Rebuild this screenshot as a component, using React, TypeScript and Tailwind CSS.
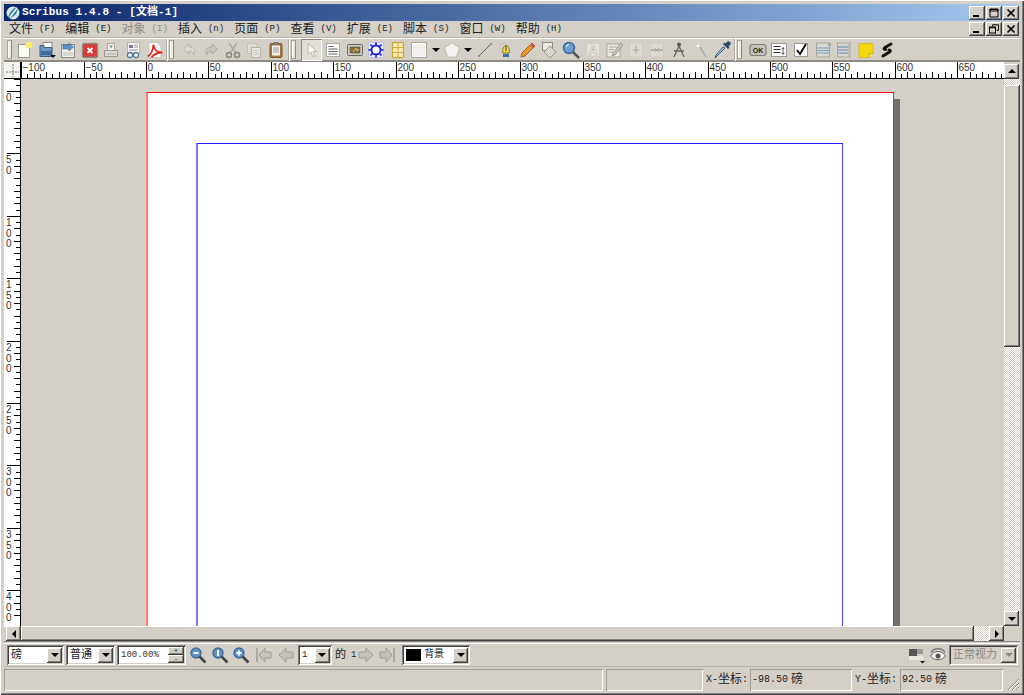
import React from "react";

const raised = "shadow-[inset_-1px_-1px_0_#404040,inset_1px_1px_0_#ffffff,inset_-2px_-2px_0_#808080,inset_2px_2px_0_#d4d0c8]";
const sunken = "shadow-[inset_1px_1px_0_#808080,inset_-1px_-1px_0_#ffffff,inset_2px_2px_0_#404040,inset_-2px_-2px_0_#d4d0c8]";
const thin = "shadow-[inset_1px_1px_0_#a09c94,inset_-1px_-1px_0_#ffffff]";
const dither = "bg-[repeating-conic-gradient(#ffffff_0_25%,#d4d0c8_0_50%)] bg-[length:2px_2px]";

const I = ({ children, w = 18 }: { children: React.ReactNode; w?: number }) => (
  <svg width={w} height="18" viewBox={`0 0 ${w} 18`} className="block">{children}</svg>
);

const Tri = ({ dir, c = "#000" }: { dir: "u" | "d" | "l" | "r"; c?: string }) => {
  const p = { u: "1,6 9,6 5,2", d: "1,3 9,3 5,7", l: "7,1 7,9 3,5", r: "3,1 3,9 7,5" }[dir];
  return <svg width="10" height="10" viewBox="0 0 10 10" className="block"><polygon points={p} fill={c} /></svg>;
};

const Handle = () => (
  <div className="w-[5px] h-[19px] shrink-0 border border-[#a8a49c] border-r-[#8c887f] bg-[#ece9e2] shadow-[inset_1px_0_0_#ffffff]" />
);
const Sep = () => <div className="w-[2px] h-[22px] mx-[1px] shrink-0 bg-[#b0aca4] border-r border-white" />;

const B = ({ children, w = "w-[21.6px]", pressed = false }: { children: React.ReactNode; w?: string; pressed?: boolean }) => (
  <div className={`${w} h-[22px] shrink-0 flex items-center justify-center ${pressed ? "bg-[#e2dfd9] shadow-[inset_1px_1px_0_#8c887f,inset_-1px_-1px_0_#ffffff]" : ""}`}>{children}</div>
);

const icons: Record<string, React.ReactNode> = {
  nw: <I><rect x="2.5" y="3.5" width="11" height="13" fill="#fbfbf6" stroke="#9a9a92" /><circle cx="13" cy="4" r="3" fill="#fff04a" stroke="#f3e9a0" /></I>,
  open: <I><rect x="5" y="1.5" width="9" height="8" fill="#fff" stroke="#888" /><path d="M2 4.500h4v2h8v9H2z" fill="#6d97c4" stroke="#3c5f86" /><path d="M3 10h11v4H3z" fill="#3f6c9e" /><path d="M12 14h6l-3 3z" fill="#111" /></I>,
  save: <I><rect x="2.5" y="3.5" width="13" height="13" fill="#f0f0ea" stroke="#8a8a84" /><rect x="4" y="11" width="10" height="4" fill="#d6d6d0" /><path d="M4 4h6V2l4.500 4L10 10V8H4z" fill="#5b93c9" stroke="#2f6494" strokeWidth=".6" /></I>,
  close: <I><rect x="1.500" y="2.500" width="15" height="14" rx="1.500" fill="#d93a35" stroke="#8c8c84" strokeWidth="1.300" /><path d="M6.500 7l5 5m0-5l-5 5" stroke="#fff" strokeWidth="1.800" /></I>,
  print: <I><rect x="5.5" y="2.5" width="7" height="7" fill="#f0f0ee" stroke="#aaa" /><path d="M7.500 5h3m-1.500 0v2" stroke="#777" /><rect x="2.5" y="9.5" width="13" height="6" fill="#dedcd7" stroke="#9a9a95" /><path d="M4 13h10" stroke="#aaa" /></I>,
  pre: <I><rect x="3.5" y="1.5" width="12" height="11" fill="#f8f8f6" stroke="#b5b5b0" /><rect x="5" y="4" width="4" height="3" fill="#778" /><path d="M10 4h4M10 6h4M5 9h9" stroke="#99a" /><circle cx="6" cy="14" r="2.5" fill="#fff" stroke="#55799e" strokeWidth="1.300" /><circle cx="12" cy="14" r="2.5" fill="#fff" stroke="#55799e" strokeWidth="1.300" /></I>,
  pdf: <I><path d="M3 1.5h8l4 4v11H3z" fill="#fff" stroke="#c5c5c0" /><path d="M2 15.500c3-2 5-6 5.500-12 .5 5 4 8 9 8-5 0-9 2-11 5" fill="none" stroke="#e02b20" strokeWidth="1.800" /></I>,
  undo: <I><path d="M8 3L2.5 8 8 13V10c3 0 4 1 5 4 2-4 1-8-5-8z" fill="#dcd9d2" stroke="#b8b4ac" /></I>,
  redo: <I><path d="M10 3l5.5 5L10 13V10c-3 0-4 1-5 4-2-4-1-8 5-8z" fill="#c9c6bf" stroke="#b0aca4" /></I>,
  cut: <I><path d="M5 2l7 10M13 2L6 12" stroke="#b0ada6" strokeWidth="1.600" /><circle cx="5" cy="14" r="2.5" fill="none" stroke="#8a8880" strokeWidth="1.600" /><circle cx="13" cy="14" r="2.5" fill="none" stroke="#8a8880" strokeWidth="1.600" /></I>,
  copy: <I><rect x="2.5" y="2.5" width="9" height="10" fill="#dedbd4" stroke="#c5c2bb" /><rect x="6.5" y="6.5" width="9" height="10" fill="#e8e6e0" stroke="#b5b2ab" /><path d="M8.500 9.500h5M8.500 11.500h5M8.500 13.500h5" stroke="#c9c6bf" /></I>,
  paste: <I><rect x="3" y="2.500" width="12" height="14" rx="1" fill="#a8763a" stroke="#7a5a2e" /><rect x="5" y="4.500" width="8" height="10" fill="#f3f3ef" /><rect x="6.500" y="1" width="5" height="3" fill="#777" /><path d="M6 7h6M6 9h6M6 11h6" stroke="#999" /></I>,
  select: <I><path d="M5 2.500v11l3-2.500 2 5 2-1-2-4.500h4z" fill="#f5f5f3" stroke="#bdbab3" /></I>,
  text: <I><rect x="2.500" y="2.500" width="13" height="13" fill="#fbfbf9" stroke="#aaa" /><path d="M4.500 5.500h5M4.500 8h9M4.500 10.500h9M4.500 13h9" stroke="#666" /></I>,
  image: <I><rect x="1.500" y="3.500" width="15" height="11" rx="1" fill="#d0ccc4" stroke="#666" /><rect x="4" y="6" width="10" height="6" fill="#8a6f3e" stroke="#444" strokeWidth=".5" /><path d="M7 11l3-4 1 3 2-2" stroke="#e8c66a" fill="none" /></I>,
  render: <I><rect x="1.500" y="1.500" width="15" height="15" fill="#e8e8f2" stroke="#a0a6ee" strokeDasharray="1 1" /><circle cx="9" cy="9" r="4.500" fill="#fff" stroke="#1a1ad0" strokeWidth="1.800" /><path d="M9 1.500v3M9 13.500v3M1.500 9h3M13.500 9h3M3.500 3.500l2 2M12.500 12.500l2 2M14.500 3.500l-2 2M5.500 12.500l-2 2" stroke="#1a1ad0" strokeWidth="1.600" /></I>,
  table: <I><rect x="3.500" y="1.500" width="11" height="15" fill="#f8ecb0" stroke="#c9a63c" strokeWidth="1.200" /><path d="M9 2v14M4 6.500h10M4 11.500h10" stroke="#d0a93c" /></I>,
  shape: <I><rect x="1.500" y="1.500" width="15" height="15" fill="#ecebe7" stroke="#a9a69f" /><rect x="2.500" y="2.500" width="13" height="13" fill="#f1f0ed" stroke="#fff" /></I>,
  poly: <I><path d="M9 1.500l7.500 5.500-3 9h-9l-3-9z" fill="#f2f1ee" stroke="#bdbab3" /></I>,
  line: <I><path d="M3 15L15 3" stroke="#666" /><circle cx="3" cy="15" r="1" fill="#888" /><circle cx="15" cy="3" r="1" fill="#888" /></I>,
  bez: <I><path d="M9 4c3 2 4 5 3 8H6C5 9 6 6 9 4z" fill="#f6d94a" stroke="#7d6a16" /><path d="M9 5v5" stroke="#444" /><rect x="6" y="13" width="6" height="3" fill="#3e70a8" /><path d="M3 5C4 2 7 1 9 3" stroke="#bbb" fill="none" /></I>,
  pencil: <I><path d="M13 2l3 3L6 15l-4 1 1-4z" fill="#e89a2e" stroke="#a0611a" /><path d="M13 2l3 3-2 2-3-3z" fill="#d5574a" /></I>,
  rotate: <I><rect x="2.500" y="1.500" width="10" height="8" fill="#e9e8e4" stroke="#8c8c88" /><path d="M10 5l6 6-6 6-6-6z" fill="#d8d6d0" stroke="#9a9892" /></I>,
  zoom: <I><circle cx="7" cy="7" r="5.500" fill="#6f9ed1" stroke="#3f6b9b" strokeWidth="1.500" /><path d="M4.500 6c0-1.500 1-2.500 2.500-2.500" stroke="#dbe9f7" fill="none" strokeWidth="1.200" /><path d="M11 11l6 6" stroke="#555" strokeWidth="2.500" /></I>,
  edit: <I><rect x="2.500" y="2.500" width="13" height="13" fill="#e4e2dd" stroke="#d2cfc8" /><text x="4.500" y="14" fontSize="13" fontWeight="700" fill="#fff" stroke="#aeaba4" strokeWidth=".6" fontFamily="Liberation Sans">A</text></I>,
  editor: <I><rect x="2" y="3" width="13" height="13" fill="#ebe9e4" stroke="#aaa7a0" /><path d="M4 6h8M4 8.500h5M4 11h4" stroke="#aaa7a0" /><path d="M16 2L8 12l-1 3 3-1 8-10z" fill="#c7c4bd" stroke="#a09d96" /></I>,
  link: <I><rect x="2.500" y="2" width="13" height="14" fill="#dcd9d2" stroke="#cfccc5" /><path d="M9 5v8M6 9h6" stroke="#b5b2ab" strokeWidth="1.300" /></I>,
  unlink: <I><rect x="2.500" y="2" width="13" height="14" fill="#dcd9d2" stroke="#cfccc5" /><path d="M3 9h5M10 9h5" stroke="#a9a69e" strokeWidth="1.300" /><path d="M7 7l2 2-2 2M11 7L9 9l2 2" stroke="#a9a69e" fill="none" /></I>,
  measure: <I><circle cx="9" cy="3.500" r="2" fill="#555" /><path d="M9 5L4 16M9 5l5 11M4 10h10" stroke="#666" strokeWidth="1.300" /></I>,
  wand: <I><path d="M14 16L8 6" stroke="#b5b2ab" strokeWidth="2" /><path d="M6 2l1 2 2 1-2 1-1 2-1-2-2-1 2-1z" fill="#fff" stroke="#cfccc5" /></I>,
  drop: <I><path d="M12 7L4 15l-2 2 1-3 7-8z" fill="#a9c8e2" stroke="#31597f" /><path d="M10 3l5 5 1.500-1.500-1-1L17 4a2 2 0 0 0-3-3l-1.500 1.500-1-1z" fill="#2a4a68" /></I>,
  ok: <I><rect x="1" y="3.500" width="16" height="11" rx="2.500" fill="#c6c3bc" stroke="#807f78" strokeWidth="1.200" /><text x="9" y="11.700" textAnchor="middle" fontSize="7" fontWeight="700" fill="#222" fontFamily="Liberation Sans">OK</text></I>,
  field: <I><rect x="1.500" y="2.500" width="15" height="13" fill="#f9f9f7" stroke="#999" /><path d="M3.500 5.500h7M3.500 8.500h7M3.500 11.500h7" stroke="#333" /><path d="M13 7v6M11.800 8L13 6.500 14.200 8M11.800 12l1.200 1.500 1.200-1.500" stroke="#333" fill="none" strokeWidth=".8" /></I>,
  check: <I><rect x="2.500" y="2.500" width="13" height="13" fill="#fff" stroke="#999" /><path d="M5 9l3 4 6-10" stroke="#111" strokeWidth="2" fill="none" /></I>,
  combo: <I><rect x="2.500" y="2" width="13" height="14" fill="#d9d7d1" stroke="#aaa7a0" /><rect x="14" y="2" width="3" height="3" fill="#aaa7a0" /><path d="M3 7h12M3 9.500h12M3 12h12" stroke="#7f9ec3" strokeWidth="1.200" /></I>,
  list: <I><rect x="2.500" y="2" width="13" height="14" fill="#d9d7d1" stroke="#aaa7a0" /><rect x="13" y="3" width="3" height="12" fill="#bfbcb5" /><path d="M3 6h10M3 9h10M3 12h10" stroke="#5f86b5" strokeWidth="1.200" /></I>,
  note: <I><path d="M2 2.500h14v10l-4 4H2z" fill="#f2d90e" stroke="#d9bb2a" /><path d="M12 16.500v-4h4" fill="#f9ec7a" stroke="#c9ab1a" /></I>,
  sig: <I><path d="M13 3L7 6.500c-1.500 1-1 2 .5 2M11 9c1.500 0 2 1 .5 2L5 15" stroke="#111" strokeWidth="3" strokeLinecap="round" fill="none" /></I>,
  zminus: <I><circle cx="7" cy="7" r="5" fill="#5f92c8" stroke="#3c6a98" strokeWidth="1.300" /><path d="M4.500 7h5" stroke="#fff" strokeWidth="1.800" /><path d="M10.500 10.500l6 6" stroke="#444" strokeWidth="2.500" /></I>,
  z1: <I><circle cx="7" cy="7" r="5" fill="#5f92c8" stroke="#3c6a98" strokeWidth="1.300" /><path d="M7 4v6" stroke="#fff" strokeWidth="2" /><path d="M10.500 10.500l6 6" stroke="#444" strokeWidth="2.500" /></I>,
  zplus: <I><circle cx="7" cy="7" r="5" fill="#5f92c8" stroke="#3c6a98" strokeWidth="1.300" /><path d="M4.500 7h5M7 4.500v5" stroke="#fff" strokeWidth="1.800" /><path d="M10.500 10.500l6 6" stroke="#444" strokeWidth="2.500" /></I>,
  first: <I><path d="M2 2v14" stroke="#a09d96" strokeWidth="1.500" /><path d="M4 9l6-7v4h6v6h-6v4z" fill="#c4c1ba" stroke="#a09d96" /></I>,
  prev: <I><path d="M2 9l7-7v4h7v6H9v4z" fill="#c4c1ba" stroke="#a09d96" /></I>,
  next: <I><path d="M16 9L9 2v4H2v6h7v4z" fill="#c4c1ba" stroke="#a09d96" /></I>,
  last: <I><path d="M16 2v14" stroke="#a09d96" strokeWidth="1.500" /><path d="M14 9L8 2v4H2v6h6v4z" fill="#c4c1ba" stroke="#a09d96" /></I>,
  layer: <I><rect x="1" y="3" width="8" height="7" fill="#555" /><rect x="9" y="3" width="6" height="5" fill="#999" /><rect x="1" y="10" width="14" height="4" fill="#e8e8e6" /><path d="M12 15h5l-2.500 2.500z" fill="#111" /></I>,
  eye: <I><path d="M1.500 10C5 4 13 4 16.500 10 13 15 5 15 1.500 10z" fill="#f4f4f2" stroke="#666" /><circle cx="9" cy="10" r="2.500" fill="#555" /><path d="M2 6.500c3-5 11-5 14 0" stroke="#777" fill="none" strokeWidth="1.400" /></I>,
};

const menus: [string, string, boolean?][] = [
  ["文件", "(F)"], ["编辑", "(E)"], ["对象", "(I)", true], ["插入", "(n)"], ["页面", "(P)"], ["查看", "(V)"],
  ["扩展", "(E)"], ["脚本", "(S)"], ["窗口", "(W)"], ["帮助", "(H)"],
];

const WinBtn = ({ k }: { k: "min" | "max" | "restore" | "close" }) => (
  <div className={`w-[16px] h-[14px] bg-[#d4d0c8] ${raised} flex items-center justify-center`}>
    <svg width="10" height="10" viewBox="0 0 10 10" className="block">
      {k === "min" && <rect x="1" y="7" width="6" height="2" fill="#000" />}
      {k === "max" && <path d="M1 1.500h8v7.500H1zM1 1h8v2H1z" fill="none" stroke="#000" />}
      {k === "restore" && <g fill="none" stroke="#000"><path d="M3.500 2.500V.8h6v5.500H7.500" /><rect x=".5" y="3" width="6" height="6" fill="#d4d0c8" /><path d="M.5 3.800h6" /></g>}
      {k === "close" && <path d="M1.500 1.500l7 7m0-7l-7 7" stroke="#000" strokeWidth="1.600" />}
    </svg>
  </div>
);

const RulerH = () => {
  const t: React.ReactNode[] = [];
  for (let u = -100; u <= 690; u += 5) {
    const x = Math.round(125 + u * 1.248) + 0.5;
    const major = u % 50 === 0;
    const h = major ? 16 : u % 10 === 0 ? 6 : 4;
    t.push(<line key={u} x1={x} x2={x} y1={16} y2={16 - h} stroke="#000" />);
    if (major) t.push(<text key={"l" + u} x={x + 1} y={9} fontSize="10" fill="#333" fontFamily="Liberation Sans">{u < 0 ? `−${-u}` : u}</text>);
  }
  return (
    <svg width="983" height="17" viewBox="0 0 983 17" className="block bg-white">
      {t}
      <line x1="0" x2="983" y1="16.500" y2="16.500" stroke="#000" />
    </svg>
  );
};

const RulerV = () => {
  const t: React.ReactNode[] = [];
  for (let u = -10; u <= 420; u += 5) {
    const y = Math.round(12 + u * 1.248) + 0.5;
    const major = u % 50 === 0;
    const w = major ? 13 : u % 10 === 0 ? 6 : 4;
    t.push(<line key={u} y1={y} y2={y} x1={16} x2={16 - w} stroke="#000" />);
    if (major) String(u).split("").forEach((d, i) => t.push(
      <text key={`l${u}${i}`} x={2} y={y + 9.500 + i * 10.700} fontSize="10" fill="#333" fontFamily="Liberation Sans">{d}</text>
    ));
  }
  return (
    <svg width="17" height="547" viewBox="0 0 17 547" className="block bg-white">
      {t}
      <line x1="16.500" x2="16.500" y1="0" y2="547" stroke="#000" />
    </svg>
  );
};

const SB = ({ d, cls = "w-[15px] h-[15px]" }: { d: "u" | "d" | "l" | "r"; cls?: string }) => (
  <div className={`${cls} shrink-0 bg-[#d4d0c8] ${raised} flex items-center justify-center`}><Tri dir={d} /></div>
);

const Combo = ({ w, children, disabled = false }: { w: string; children: React.ReactNode; disabled?: boolean }) => (
  <div className={`${w} h-[20px] shrink-0 flex items-center pl-[4px] pr-[2px] ${sunken} ${disabled ? "bg-[#d4d0c8] text-[#8a877f]" : "bg-white text-[#222]"} text-[11px]`}>
    <div className="flex-1 flex items-center min-w-0 whitespace-nowrap">{children}</div>
    <div className={`w-[15px] h-[15px] shrink-0 bg-[#d4d0c8] ${raised} flex items-center justify-center`}><Tri dir="d" c={disabled ? "#8a877f" : "#000"} /></div>
  </div>
);

const row1a = ["nw", "open", "save", "close", "print", "pre", "pdf"];
const row1b = ["undo", "redo", "cut", "copy", "paste"];
const row1d = ["ok", "field", "check", "combo", "list", "note", "sig"];

export default function App() {
  return (
    <div className="w-[1024px] h-[695px] overflow-hidden bg-[#d4d0c8] pt-[4px] px-[4px] text-black text-[12px] leading-none font-[family-name:'Liberation_Mono','Noto_Sans_CJK_SC',monospace] shadow-[inset_0_1px_0_#ffffff,inset_1px_0_0_#ffffff,inset_-1px_-1px_0_#404040,inset_-2px_-2px_0_#808080]">
      <div className="h-[17px] flex items-center justify-between bg-gradient-to-r from-[#0a246a] to-[#a6caf0] pr-[1px]">
        <div className="flex items-center">
          <svg width="16" height="16" viewBox="0 0 16 16" className="block mx-[1px]"><circle cx="8" cy="8" r="6.500" fill="#d8e8ee" /><path d="M3 13C4 8 7 4 12 2c2 5-3 11-9 11z" fill="#2f7f9c" /><path d="M5 12l7-9" stroke="#fff" strokeWidth="1.400" /></svg>
          <span className="text-white font-bold text-[11px] tracking-[0.1px]">Scribus 1.4.8 - [文档-1]</span>
        </div>
        <div className="flex gap-[1px]"><WinBtn k="min" /><WinBtn k="max" /><WinBtn k="close" /></div>
      </div>

      <div className="h-[17px] flex items-center justify-between pl-[5px] pr-[1px] border-b border-[#b8b4ac]">
        <div className="flex pt-[1px]">
          {menus.map(([a, b, dis]) => (
            <div key={a + b} className={`w-[56.3px] flex items-center gap-[6px] whitespace-nowrap ${dis ? "text-[#8f8c85]" : "text-[#222]"}`}>
              <span className="text-[12px]">{a}</span><span className="text-[9px]">{b}</span>
            </div>
          ))}
        </div>
        <div className="flex gap-[1px]"><WinBtn k="min" /><WinBtn k="restore" /><WinBtn k="close" /></div>
      </div>

      <div className="h-[24px] flex items-center pl-[3px] border-b-2 border-[#8d8a83] border-t border-t-white">
        <Handle />
        <div className="w-[2.200px] shrink-0" />
        {row1a.map(k => <B key={k}>{icons[k]}</B>)}
        <Sep /><Handle /><div className="w-[4.400px] shrink-0" />
        {row1b.map(k => <B key={k}>{icons[k]}</B>)}
        <Sep /><Handle /><div className="w-[5px] shrink-0" />
        <B pressed>{icons.select}</B>
        {["text", "image", "render", "table", "shape"].map(k => <B key={k}>{icons[k]}</B>)}
        <div className="w-[11px] shrink-0 flex justify-center"><Tri dir="d" /></div>
        <B>{icons.poly}</B>
        <div className="w-[11px] shrink-0 flex justify-center"><Tri dir="d" /></div>
        {["line", "bez", "pencil", "rotate", "zoom", "edit", "editor", "link", "unlink", "measure", "wand", "drop"].map(k => <B key={k}>{icons[k]}</B>)}
        <Sep /><Handle /><div className="w-[5px] shrink-0" />
        {row1d.map(k => <B key={k}>{icons[k]}</B>)}
      </div>

      <div className="h-[579px] flex">
        <div className="w-[1000px] flex flex-col">
          <div className="h-[17px] flex">
            <div className="w-[17px] h-[17px] bg-[#f4f3f0] border-b border-r border-black flex items-center justify-center">
              <svg width="15" height="15" viewBox="0 0 15 15" className="block"><path d="M1 9h13M8 1v13" stroke="#777" strokeDasharray="2 1" /></svg>
            </div>
            <RulerH />
          </div>
          <div className="h-[547px] flex">
            <RulerV />
            <div className="flex-1 overflow-hidden bg-[#d4d0c8] pl-[125px] pt-[13px]">
              <div className="w-[748px] h-[800px] bg-white border-solid border-t border-r border-b border-l-2 border-t-[#fa0000] border-r-[#f52020] border-b-[#fa0000] border-l-[#ff7a7a] shadow-[6px_7px_0_#6f6f6f] pl-[48px] pt-[50px]">
                <div className="w-[647px] h-[800px] border-solid border-t border-r border-b border-l-2 border-t-[#2020ff] border-r-[#4040ff] border-b-[#2020ff] border-l-[#7a7aff]" />
              </div>
            </div>
          </div>
          <div className="h-[15px] flex pl-[2px] shadow-[inset_0_1px_0_#ffffff]">
            <SB d="l" />
            <div className={`flex-1 bg-[#d4d0c8] ${raised}`} />
            <div className={`w-[15px] h-[15px] shrink-0 ${dither}`} />
            <SB d="r" />
          </div>
        </div>
        <div className="w-[16px] flex flex-col pt-[2px]">
          <SB d="u" />
          <div className={`h-[6px] ${dither}`} />
          <div className={`h-[262px] bg-[#d4d0c8] ${raised}`} />
          <div className={`flex-1 ${dither}`} />
          <SB d="d" />
          <div className="h-[15px]" />
        </div>
      </div>

      <div className="h-[3px] border-t border-b border-t-[#8d8a83] border-b-white" />

      <div className="h-[23px] flex items-center justify-between pl-[3px] pr-[2px] border-b border-[#b8b4ac]">
        <div className="flex items-center">
          <Combo w="w-[57px]"><span>磅</span></Combo>
          <div className="w-[2px] shrink-0" />
          <Combo w="w-[49px]"><span>普通</span></Combo>
          <div className="w-[2px] shrink-0" />
          <div className={`w-[69px] h-[20px] shrink-0 flex items-center pl-[4px] bg-white ${sunken} text-[9px] text-[#333]`}>
            <span className="flex-1">100.00%</span>
            <div className="w-[16px] h-[16px] mr-[2px] flex flex-col">
              <div className={`flex-1 bg-[#d4d0c8] ${raised} flex items-center justify-center text-[8px]`}>+</div>
              <div className={`flex-1 bg-[#d4d0c8] ${raised} flex items-center justify-center text-[8px]`}>-</div>
            </div>
          </div>
          <div className="w-[1.200px] shrink-0" />
          {["zminus", "z1", "zplus"].map(k => <B key={k}>{icons[k]}</B>)}
          <div className="w-[1.200px] shrink-0" />
          {["first", "prev"].map(k => <B key={k}>{icons[k]}</B>)}
          <div className="w-[1.600px] shrink-0" />
          <Combo w="w-[34px]"><span className="text-[9px]">1</span></Combo>
          <span className="ml-[3px] text-[11px] text-[#222]">的</span>
          <span className="ml-[5px] text-[9px] w-[4px] text-[#222]">1</span>
          {["next", "last"].map(k => <B key={k}>{icons[k]}</B>)}
          <div className="w-[4px] shrink-0" />
          <Combo w="w-[68px]">
            <span className="w-[15px] h-[12px] bg-black mr-[3px]" /><span className="text-[10px]">背景</span>
          </Combo>
        </div>
        <div className="flex items-center">
          <B>{icons.layer}</B>
          <B>{icons.eye}</B>
          <Combo w="w-[69px]" disabled><span className="text-[11px]">正常视力</span></Combo>
        </div>
      </div>

      <div className="h-[24px] flex items-center pt-[1px] text-[#222]">
        <div className={`w-[599px] h-[22px] shrink-0 ${thin}`} />
        <div className="w-[3px] shrink-0" />
        <div className={`w-[97px] h-[22px] shrink-0 ${thin}`} />
        <div className="w-[3px] shrink-0" />
        <span className="w-[44px] shrink-0 text-[10px] whitespace-nowrap flex items-center">X-<span className="text-[12px]">坐标</span>:</span>
        <div className={`w-[102px] h-[22px] shrink-0 ${thin} flex items-center pl-[2px] text-[10px] whitespace-nowrap`}>-98.50 <span className="text-[12px] ml-[3px]">磅</span></div>
        <div className="w-[3px] shrink-0" />
        <span className="w-[45px] shrink-0 text-[10px] whitespace-nowrap flex items-center">Y-<span className="text-[12px]">坐标</span>:</span>
        <div className={`w-[103px] h-[22px] shrink-0 ${thin} flex items-center pl-[2px] text-[10px] whitespace-nowrap`}>92.50 <span className="text-[12px] ml-[3px]">磅</span></div>
        <div className="flex-1 h-[22px] flex items-end justify-end">
          <svg width="14" height="14" viewBox="0 0 14 14" className="block"><path d="M13 2L2 13M13 6L6 13M13 10l-3 3" stroke="#8a877f" /><path d="M13 3L3 13M13 7l-6 6M13 11l-2 2" stroke="#fff" /></svg>
        </div>
      </div>
    </div>
  );
}
